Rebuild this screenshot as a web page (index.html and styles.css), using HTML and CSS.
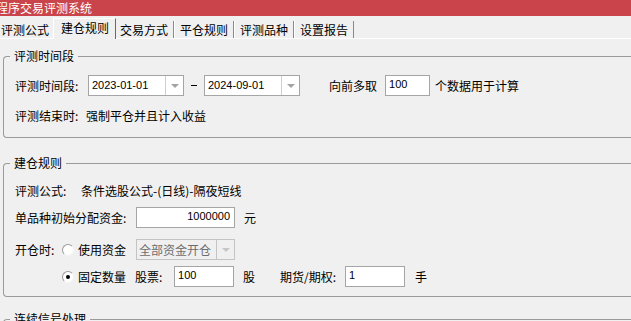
FILE: index.html
```html
<!DOCTYPE html>
<html lang="zh-CN">
<head>
    <meta charset="UTF-8">
    <title>程序交易评测系统</title>
    <link rel="stylesheet" href="styles.css">
</head>
<body>

    <div class="titlebar"><span>程序交易评测系统</span></div>

    <div class="tabs">
        <div class="tab">评测公式</div>
        <div class="tab active">建仓规则</div>
        <div class="tab">交易方式</div>
        <div class="tab">平仓规则</div>
        <div class="tab">评测品种</div>
        <div class="tab">设置报告</div>
    </div>

    <div class="panel">
        <fieldset class="group period">
            <legend>评测时间段</legend>
            <div class="row date-row">
                <span class="lbl w-period">评测时间段:</span>
                <div class="combo date"><span class="val">2023-01-01</span><span class="drop"></span></div>
                <span class="dash"></span>
                <div class="combo date"><span class="val">2024-09-01</span><span class="drop"></span></div>
                <span class="lbl forward">向前多取</span>
                <div class="edit count">100</div>
                <span class="lbl after">个数据用于计算</span>
            </div>
            <div class="row end-row">
                <span class="lbl w-end">评测结束时:</span>
                <span>强制平仓并且计入收益</span>
            </div>
        </fieldset>

        <fieldset class="group build">
            <legend>建仓规则</legend>
            <div class="row formula-row">
                <span class="lbl w-formula">评测公式:</span>
                <span>条件选股公式-(日线)-隔夜短线</span>
            </div>
            <div class="row money-row">
                <span class="lbl w-money">单品种初始分配资金:</span>
                <div class="edit money">1000000</div>
                <span class="unit">元</span>
            </div>
            <div class="row open-row">
                <span class="lbl w-open">开仓时:</span>
                <span class="radio"></span>
                <span class="opt">使用资金</span>
                <div class="combo disabled"><span class="val">全部资金开仓</span><span class="drop"></span></div>
            </div>
            <div class="row fixed-row">
                <span class="radio checked"></span>
                <span class="opt">固定数量</span>
                <span class="lbl w-stock">股票:</span>
                <div class="edit qty">100</div>
                <span class="unit">股</span>
                <span class="lbl w-future">期货/期权:</span>
                <div class="edit qty">1</div>
                <span class="unit hand">手</span>
            </div>
        </fieldset>

        <fieldset class="group signal">
            <legend>连续信号处理</legend>
        </fieldset>
    </div>

</body>
</html>
```

FILE: styles.css
```css
/* Classic dialog look */
body {
    margin: 0;
    width: 631px;
    height: 321px;
    overflow: hidden;
    background-color: #f0f0f0;
    color: #000;
    font-family: "Noto Sans CJK SC", sans-serif;
    font-size: 12px;
}

.titlebar {
    height: 16px;
    line-height: 16px;
    background-color: #c9444b;
    color: #fff;
    white-space: nowrap;
}

.titlebar span {
    display: inline-block;
    margin-left: -4px;
}

/* Tabs */
.tabs {
    display: flex;
    align-items: flex-end;
    height: 22px;
    margin-left: -5px;
    position: relative;
    z-index: 1;
}

.tab {
    height: 17px;
    line-height: 18px;
    padding: 0 5px;
    border-left: 1px solid #fff;
    border-right: 1px solid #8a8a8a;
    white-space: nowrap;
}

.tab.active {
    height: 20px;
    line-height: 17px;
    margin: 0 -2px -1px;
    padding: 0 6px 0 7px;
    border-top: 1px solid #fff;
    border-right: 1px solid #6a6a6a;
    background-color: #f0f0f0;
    position: relative;
}

.panel {
    height: 282px;
    border-top: 1px solid #fff;
    overflow: hidden;
}

/* Group boxes */
.group {
    margin: 0 -12px 0 3px;
    padding: 0 0 0 11px;
    border: 1px solid #9a9a9a;
    border-right: none;
    border-radius: 4px 0 0 4px;
    min-width: 0;
}

.group legend {
    margin-left: -5px;
    padding: 0 4px;
    line-height: 14px;
}

.period {
    margin-top: 10px;
    padding-top: 12px;
    padding-bottom: 12px;
}

.build {
    margin-top: 18px;
    padding-top: 10px;
    padding-bottom: 9px;
}

.signal {
    margin-top: 15px;
    height: 20px;
}

.row {
    display: flex;
    align-items: center;
    height: 21px;
    white-space: nowrap;
}

.lbl {
    flex: none;
}

.w-period { width: 73px; }
.w-end { width: 71px; }
.w-formula { width: 66px; }
.w-money { width: 121px; }
.w-open { width: 47px; }
.w-stock { width: 39px; margin-left: 9px; }
.w-future { width: 65px; margin-left: 25px; }

.end-row { margin-top: 9px; height: 20px; }
.formula-row { height: 20px; }
.money-row { margin-top: 7px; }
.open-row { margin-top: 11px; }
.fixed-row { margin-top: 6px; padding-left: 47px; }

.forward { margin-left: 29px; }
.after { margin-left: 5px; }
.unit { margin-left: 9px; }
.unit.hand { margin-left: 10px; }
.opt { margin-left: 4px; }

.dash {
    width: 6px;
    height: 1px;
    margin: 0 7px;
    background-color: #000;
}

/* Inputs */
.combo,
.edit {
    box-sizing: border-box;
    height: 21px;
    border: 1px solid #a5a5a5;
    background-color: #fff;
    flex: none;
}

.combo {
    display: flex;
}

.combo .val {
    flex: 1;
    padding-left: 3px;
    line-height: 19px;
    font-family: "Liberation Sans", sans-serif;
    font-size: 11px;
}

.combo .drop {
    width: 17px;
    border-left: 1px solid #cfcfcf;
    display: flex;
    align-items: center;
    justify-content: center;
}

.combo .drop::after {
    content: "";
    border-left: 4px solid transparent;
    border-right: 4px solid transparent;
    border-top: 4px solid #a3a3a3;
}

.combo.date {
    width: 96px;
}

.combo.disabled {
    width: 99px;
    margin-left: 10px;
    border-color: #c4c4c4;
    background-color: #f0f0f0;
}

.combo.disabled .val {
    font-family: "Noto Sans CJK SC", sans-serif;
    font-size: 12px;
    color: #6d6d6d;
    padding-left: 2px;
}

.combo.disabled .drop {
    border-left-color: #c4c4c4;
}

.combo.disabled .drop::after {
    border-top-color: #c6c6c6;
}

.edit {
    padding: 0 3px;
    line-height: 17px;
    font-family: "Liberation Sans", sans-serif;
    font-size: 11px;
}

.edit.count { width: 45px; margin-left: 8px; }
.edit.money { width: 99px; text-align: right; padding-right: 4px; }
.edit.qty { width: 60px; }

/* Radio buttons */
.radio {
    flex: none;
    box-sizing: border-box;
    width: 12px;
    height: 12px;
    border-radius: 50%;
    border: 1px solid;
    border-color: #9a9a9a #f4f4f4 #f4f4f4 #9a9a9a;
    background-color: #fff;
    display: flex;
    align-items: center;
    justify-content: center;
}

.radio.checked::after {
    content: "";
    width: 4px;
    height: 4px;
    border-radius: 50%;
    background-color: #000;
}
```
